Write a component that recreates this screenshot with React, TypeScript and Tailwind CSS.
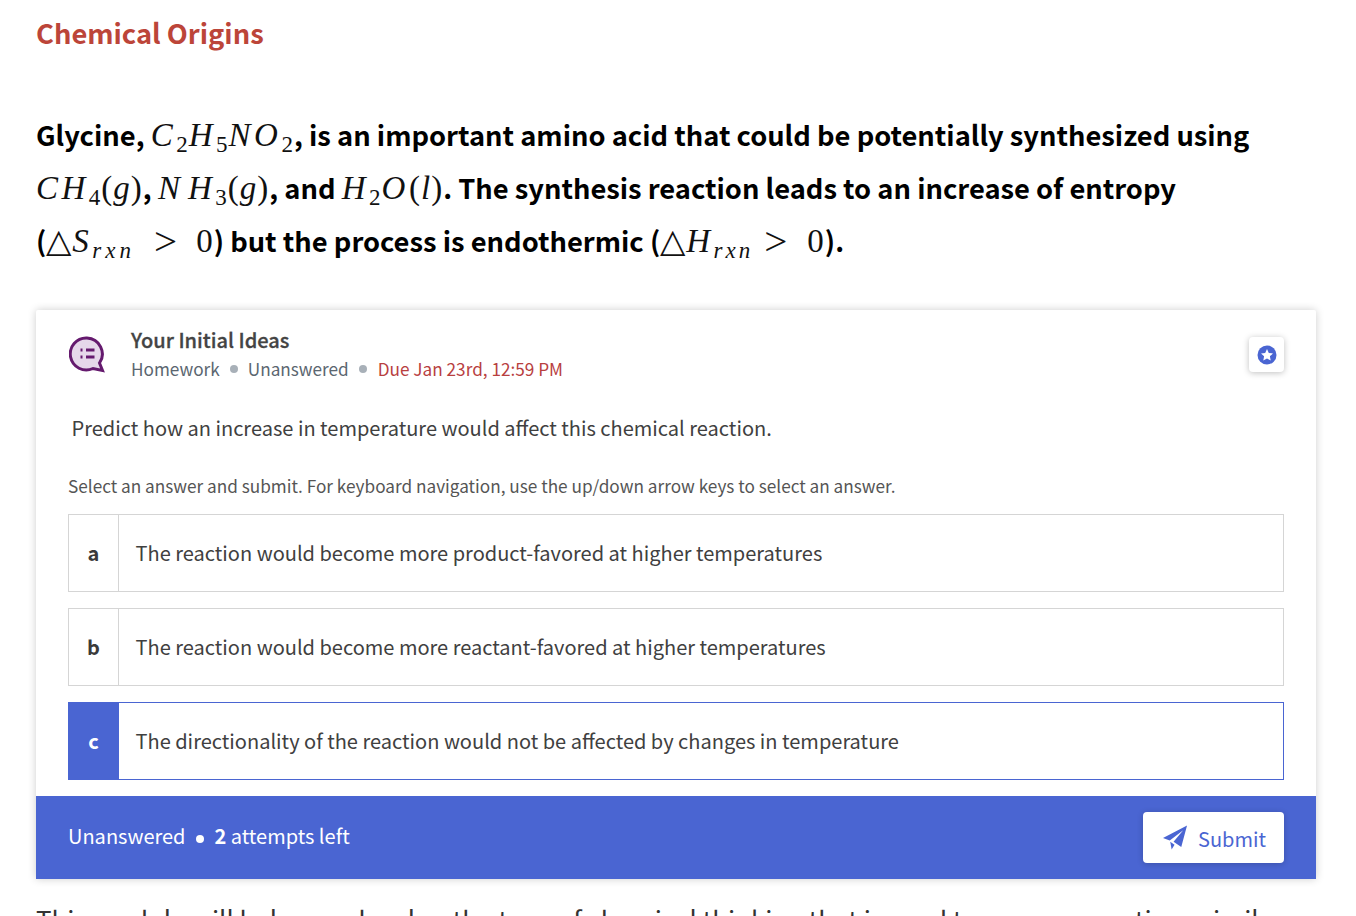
import React from "react";

function M({ children }: { children: React.ReactNode }) {
  return <span className="font-['Liberation_Serif',serif] font-normal text-[33px] leading-none text-[#111] tracking-[1px]">{children}</span>;
}
function I({ children }: { children: React.ReactNode }) {
  return <i className="italic tracking-[3.5px]">{children}</i>;
}
function G({ children }: { children: React.ReactNode }) {
  return <i className="italic">{children}</i>;
}
function Sub({ children }: { children: React.ReactNode }) {
  return <sub className="text-[23px] align-baseline relative top-[6px] leading-none tracking-[1px]">{children}</sub>;
}
function Rxn({ wide }: { wide?: boolean }) {
  return <sub className={`text-[23px] align-baseline relative top-[6px] leading-none ${wide ? "tracking-[4px]" : "tracking-[3px]"}`}><G>rxn</G></sub>;
}
function Gt({ left }: { left: "wide" | "narrow" }) {
  return <span className={`text-[41px] leading-none tracking-normal relative top-[3px] ${left === "wide" ? "ml-[19px] mr-[19px]" : "ml-[11px] mr-[20px]"}`}>&gt;</span>;
}
function Option({ k, text, selected }: { k: string; text: string; selected?: boolean }) {
  return (
    <div className={`flex h-[78px] border ${selected ? "border-[#4a65d2]" : "border-[#d5d5d5]"}`}>
      <div className={`w-[50px] flex items-center justify-center text-[20px] font-semibold border-r ${selected ? "bg-[#4a65d2] text-white border-[#4a65d2]" : "border-[#d5d5d5] text-[#3a3a3a]"}`}>{k}</div>
      <div className="flex-1 flex items-center pl-[16.500px] text-[20.03px] text-[#404040]">{text}</div>
    </div>
  );
}
export default function App() {
  return (
    <div className="h-[916px] overflow-hidden bg-white pl-9 pr-10 font-['Noto_Sans_CJK_JP','Noto_Sans',sans-serif]">
      <h2 className="pt-[12px] text-[27.3px] leading-[40px] font-bold text-[#bc4539]">Chemical Origins</h2>
      <div className="mt-[56px] text-[27.3px] leading-[53px] font-bold text-black whitespace-nowrap">
        <div className="h-[53px]">Glycine, <M><I>C</I><Sub>2</Sub><I>H</I><Sub>5</Sub><I>NO</I><Sub>2</Sub></M>, is an important amino acid that could be potentially synthesized using</div>
        <div className="h-[53px]"><M><I>CH</I><Sub>4</Sub>(<G>g</G>)</M>, <M><i className="italic tracking-[8px]">N</i><I>H</I><Sub>3</Sub>(<G>g</G>)</M>, and <M><I>H</I><Sub>2</Sub><I>O</I>(<G>l</G>)</M>. The synthesis reaction leads to an increase of entropy</div>
        <div className="h-[53px]">(<M>△<I>S</I><Rxn wide /><Gt left="wide" />0</M>) but the process is endothermic (<M>△<I>H</I><Rxn /><Gt left="narrow" />0</M>).</div>
      </div>
      <div className="mt-[43px] shadow-[0_0_8px_rgba(0,0,0,0.2)] rounded-t-[2px]">
        <div className="px-8 pt-[14px]">
          <div className="flex justify-between">
            <div className="flex gap-[26px]">
              <svg width="36" height="37" viewBox="0 0 36 37" className="mt-[12px] ml-[1px]">
                <path d="M18 2a16 16 0 1 0 6 30.500l9.500 2-3-7.500A16 16 0 0 0 18 2z" fill="#e6d8ea" stroke="#651a6e" strokeWidth="3" />
                <path d="M11.500 14h2M11.500 21h2M17 14h8.500M17 21h8.500" stroke="#651a6e" strokeWidth="3" />
              </svg>
              <div>
                <div className="text-[20px] leading-[32px] font-medium text-[#444] [-webkit-text-stroke:0.3px_#444]">Your Initial Ideas</div>
                <div className="-mt-[1px] flex items-center text-[17.2px] leading-[28px] text-[#5b6670]">
                  <span>Homework</span><span className="mx-[10px] h-2 w-2 rounded-full bg-[#a8b0b8]" /><span>Unanswered</span><span className="mx-[10.500px] h-2 w-2 rounded-full bg-[#a8b0b8]" /><span className="text-[#b8403f]">Due Jan 23rd, 12:59 PM</span>
                </div>
              </div>
            </div>
            <div className="mt-[13px] h-[35px] w-[35px] rounded flex items-center justify-center shadow-[0_1px_6px_rgba(0,0,0,0.25)]">
              <svg width="20" height="20" viewBox="0 0 20 20"><circle cx="10" cy="10" r="9.500" fill="#4a65d2" /><path d="M10 4l1.800 3.900 4.200.5-3.100 2.900.8 4.200L10 13.400l-3.700 2.100.8-4.200L4 8.400l4.200-.5z" fill="#fff" /></svg>
            </div>
          </div>
          <p className="mt-[29px] ml-[3.500px] text-[20.03px] leading-[32px] text-[#404040]">Predict how an increase in temperature would affect this chemical reaction.</p>
          <p className="mt-[28px] text-[17.2px] leading-[28px] text-[#555]">Select an answer and submit. For keyboard navigation, use the up/down arrow keys to select an answer.</p>
          <div className="mt-[14px] flex flex-col gap-4">
            <Option k="a" text="The reaction would become more product-favored at higher temperatures" />
            <Option k="b" text="The reaction would become more reactant-favored at higher temperatures" />
            <Option k="c" selected text="The directionality of the reaction would not be affected by changes in temperature" />
          </div>
        </div>
        <div className="mt-4 h-[83px] bg-[#4a65d2] px-8 flex items-center justify-between text-white">
          <div className="text-[20px] flex items-center pb-[3px]">Unanswered<span className="mx-[10.500px] mt-[6px] h-2 w-2 rounded-full bg-white" /><b className="font-semibold">2</b>&nbsp;attempts left</div>
          <button className="h-[51px] w-[141px] pl-[2px] bg-white rounded flex items-center justify-center gap-[10px] text-[20px] text-[#4a65d2] shadow-[0_1px_6px_rgba(0,0,0,0.2)]">
            <svg width="25" height="25" viewBox="0 0 26 25" fill="#4a65d2"><path d="M25 0L0 13l7 2.500L21 5 11 17l8 5.500zM7.500 17l1.500 8 3-5z" /></svg><span className="pt-[2px]">Submit</span>
          </button>
        </div>
      </div>
      <p className="mt-[20px] text-[25.9px] leading-[40px] text-[#333] whitespace-nowrap">This module will help you develop the type of chemical thinking that is used to answer questions similar</p>
    </div>
  );
}
